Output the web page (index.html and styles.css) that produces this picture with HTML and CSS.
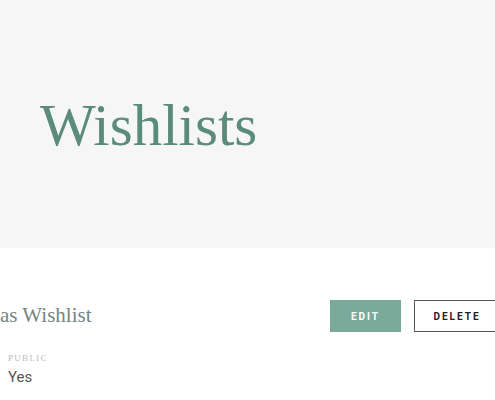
FILE: index.html
```html
<!DOCTYPE html>
<html lang="en">
<head>
  <meta charset="UTF-8" />
  <meta name="viewport" content="width=device-width, initial-scale=1.0" />
  <title>Wishlists</title>
  <link rel="stylesheet" href="styles.css">
</head>
<body>
  <header class="page-header">
    <h1 class="page-title">Wishlists</h1>
  </header>

  <section class="wishlist">
    <div class="wishlist-head">
      <h2 class="wishlist-name">as Wishlist</h2>
      <div class="wishlist-actions">
        <button class="btn btn-edit">Edit</button>
        <button class="btn btn-delete">Delete</button>
      </div>
    </div>
    <div class="wishlist-meta">
      <span class="meta-label">Public</span>
      <span class="meta-value">Yes</span>
    </div>
  </section>
</body>
</html>
```

FILE: styles.css
```css
html, body {
  margin: 0;
  overflow: hidden;
}
body {
  font-family: Roboto, "Liberation Sans", sans-serif;
  background-color: #fff;
}

.page-header {
  box-sizing: border-box;
  height: 248px;
  padding: 96px 0 0 40px;
  background-color: #f6f6f6;
}
.page-title {
  margin: 0;
  font-family: "Liberation Serif", serif;
  font-weight: normal;
  font-size: 59px;
  line-height: 1;
  color: #5b8b7c;
}

.wishlist {
  padding-top: 52px;
}
.wishlist-head {
  display: flex;
  align-items: center;
  justify-content: space-between;
  margin-right: -5px;
}
.wishlist-name {
  margin: 0 0 2px;
  font-family: "Liberation Serif", serif;
  font-weight: normal;
  font-size: 21px;
  color: #74867f;
}
.wishlist-actions {
  display: flex;
  gap: 13px;
}

.btn {
  box-sizing: border-box;
  height: 32px;
  font-family: Roboto, "Liberation Sans", sans-serif;
  font-size: 10px;
  font-weight: bold;
  letter-spacing: 2px;
  text-transform: uppercase;
  cursor: pointer;
}
.btn-edit {
  width: 71px;
  border: none;
  background-color: #7aaa9a;
  color: #fff;
}
.btn-delete {
  width: 86px;
  border: 1px solid #555;
  background-color: #fff;
  color: #222;
}

.wishlist-meta {
  display: flex;
  flex-direction: column;
  gap: 5px;
  padding: 21px 0 0 8px;
}
.meta-label {
  font-family: "Liberation Serif", serif;
  font-size: 9px;
  letter-spacing: 1.3px;
  text-transform: uppercase;
  color: #bbb;
}
.meta-value {
  font-size: 15px;
  color: #555;
}
```
